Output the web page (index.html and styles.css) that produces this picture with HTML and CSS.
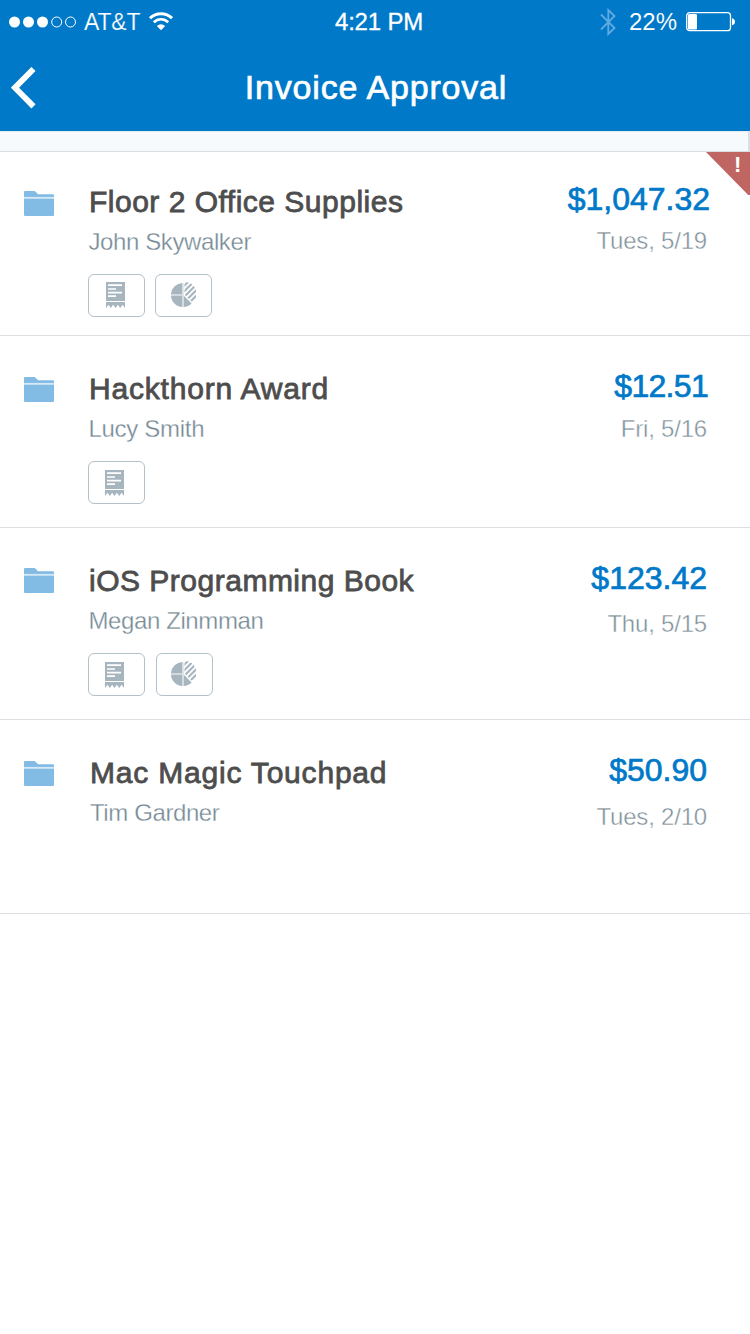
FILE: index.html
```html
<!DOCTYPE html>
<html lang="en">
<head>
<meta charset="utf-8">
<title>Invoice Approval</title>
<link rel="stylesheet" href="styles.css">
</head>
<body>
<svg class="defs" aria-hidden="true">
  <symbol id="folder" viewBox="0 0 30 25">
    <path d="M0 1Q0 0 1 0H10.5Q11.5 .3 14 3.3H29Q30 3.3 30 4.3V6H0Z" fill="#82bbe4"/>
    <path d="M0 5.9H30V8H0Z" fill="#d6e9f6"/>
    <path d="M0 7.8H30V24Q30 25 29 25H1Q0 25 0 24Z" fill="#82bbe4"/>
  </symbol>
  <symbol id="receipt" viewBox="0 0 19 26">
    <path d="M0 0H19V19H0ZM0 20H19V26L16.6 22.8L14.3 26L11.9 22.8L9.5 26L7.1 22.8L4.8 26L2.4 22.8L0 26Z" fill="#a7b5bf"/>
    <path d="M2 3.2H16M2 7H10M2 10.6H16M2 14.2H10" stroke="#fff" stroke-width="1.7"/>
  </symbol>
  <symbol id="pie" viewBox="0 0 25 25">
    <clipPath id="wedge"><path d="M13.5 0A12 12 0 0 1 21.8 20.8L13.5 12.5Z"/></clipPath>
    <path d="M11.4 1V12H0A12 12 0 0 1 11.4 1ZM0 13.4H11.4V25A12 12 0 0 1 0 13.4ZM12.6 13.4L20.6 21.5A12 12 0 0 1 12.6 25Z" fill="#a7b5bf"/>
    <path d="M11.4 1H12.6V25H11.4ZM0 12H12V13.4H0Z" fill="#d3dadf"/>
    <path clip-path="url(#wedge)" d="M10 7L20 -3M10 12.5L25 -2.5M12 16L27 1M15 18.5L29 4.5M17 22L30 9" stroke="#a7b5bf" stroke-width="2.1"/>
  </symbol>
</svg>

<header class="header">
  <div class="status">
    <div class="status-left">
      <svg width="68" height="14" viewBox="0 0 68 14"><g fill="#fff"><circle cx="5.5" cy="7" r="5.5"/><circle cx="19.5" cy="7" r="5.5"/><circle cx="33.5" cy="7" r="5.5"/></g><g fill="none" stroke="#fff"><circle cx="47.7" cy="7" r="5"/><circle cx="61.5" cy="7" r="5"/></g></svg>
      <span class="carrier">AT&amp;T</span>
      <svg class="wifi" width="24" height="19" viewBox="0 0 24 19"><g fill="none" stroke="#fff"><path d="M1 6.2C7 .1 17 .1 23 6.2" stroke-width="3"/><path d="M4.8 10.3C9 6.2 15 6.2 19.2 10.3" stroke-width="2.7"/></g><path d="M12 18.3L7.8 14.1Q12 10.4 16.2 14.1Z" fill="#fff"/></svg>
    </div>
    <span class="clock">4:21 PM</span>
    <div class="status-right">
      <svg width="16" height="28" viewBox="0 0 16 28"><path d="M1 6.5L14.5 20L8.3 26V2L14.5 8L1 21.5" fill="none" stroke="#62abe0" stroke-width="1.8"/></svg>
      <span class="percent">22%</span>
      <svg width="49" height="20" viewBox="0 0 49 20"><rect x=".7" y=".7" width="43.8" height="18" rx="3" fill="none" stroke="#fff" stroke-width="1.3"/><rect x="2" y="2" width="9" height="15.5" rx="1.3" fill="#fff"/><path d="M46 6.3Q49 7.2 49 9.8T46 13.3Z" fill="#fff"/></svg>
    </div>
  </div>
  <div class="nav">
    <svg class="back" width="25" height="42" viewBox="0 0 25 42"><path d="M22.5 2L4 20.7L22.5 39.4" fill="none" stroke="#fff" stroke-width="5.8"/></svg>
    <h1 class="heading">Invoice Approval</h1>
  </div>
</header>
<div class="strip"></div>

<main class="list">
  <article class="row row-first">
    <svg class="folder"><use href="#folder"/></svg>
    <div class="info">
      <h2 class="title">Floor 2 Office Supplies</h2>
      <p class="person">John Skywalker</p>
      <div class="pills"><span class="pill"><svg class="receipt"><use href="#receipt"/></svg></span><span class="pill"><svg class="pie"><use href="#pie"/></svg></span></div>
    </div>
    <div class="figures"><p class="amount">$1,047.32</p><p class="date">Tues, 5/19</p></div>
    <div class="alert"><span class="bang">!</span></div>
  </article>
  <article class="row row-second">
    <svg class="folder"><use href="#folder"/></svg>
    <div class="info">
      <h2 class="title">Hackthorn Award</h2>
      <p class="person">Lucy Smith</p>
      <div class="pills"><span class="pill"><svg class="receipt"><use href="#receipt"/></svg></span></div>
    </div>
    <div class="figures"><p class="amount">$12.51</p><p class="date">Fri, 5/16</p></div>
  </article>
  <article class="row row-third">
    <svg class="folder"><use href="#folder"/></svg>
    <div class="info">
      <h2 class="title">iOS Programming Book</h2>
      <p class="person">Megan Zinmman</p>
      <div class="pills"><span class="pill"><svg class="receipt"><use href="#receipt"/></svg></span><span class="pill"><svg class="pie"><use href="#pie"/></svg></span></div>
    </div>
    <div class="figures"><p class="amount">$123.42</p><p class="date">Thu, 5/15</p></div>
  </article>
  <article class="row row-fourth">
    <svg class="folder"><use href="#folder"/></svg>
    <div class="info">
      <h2 class="title">Mac Magic Touchpad</h2>
      <p class="person">Tim Gardner</p>
    </div>
    <div class="figures"><p class="amount">$50.90</p><p class="date">Tues, 2/10</p></div>
  </article>
</main>
</body>
</html>
```

FILE: styles.css
```css
* { box-sizing: border-box; }
body { margin: 0; background: #fff; font-family: "Liberation Sans", Arial, sans-serif; min-height: 1334px; }
h1, h2, p { margin: 0; font-weight: 400; white-space: nowrap; }
svg { display: block; flex: none; }
.defs { position: absolute; width: 0; height: 0; }

.header { height: 131px; background: #0079c9; color: #fff; }
.status { height: 44px; display: grid; grid-template-columns: 1fr auto 1fr; padding: 0 15px 0 9px; font-size: 24px; line-height: 44px; }
.status-left, .status-right { display: flex; align-items: center; }
.status-right { justify-content: flex-end; }
.carrier { font-size: 23px; margin-left: 7px; letter-spacing: -.2px; -webkit-text-stroke: .2px #0079c9; }
.wifi { margin: -2px 0 0 9px; }
.clock { margin-left: 14px; letter-spacing: -.2px; -webkit-text-stroke: .3px #fff; }
.percent { margin: 0 9px 0 13px; -webkit-text-stroke: .1px #0079c9; }
.nav { height: 87px; display: grid; grid-template-columns: 100px 1fr 100px; }
.back { margin: 23px 0 0 11px; }
.heading { text-align: center; font-size: 34px; line-height: 87px; letter-spacing: .8px; margin-left: 2px; -webkit-text-stroke: .7px #fff; }
.strip { height: 21px; background: #f6fafd; border-top: 1px solid #e4ebf0; border-bottom: 1px solid #dadfe3; border-right: 2px solid #dadfe6; }

.row { position: relative; display: flex; height: 192px; padding: 33px 43px 0 24px; border-bottom: 1px solid #dcdfe2; }
.row-first { height: 184px; padding-top: 30px; padding-right: 40px; }
.row-fourth { height: 194px; }
.folder { width: 30px; height: 25px; margin-top: 8px; }
.row-first .folder { margin-top: 9px; }
.row-third .folder { margin-top: 7px; }
.info { flex: 1; margin-left: 34px; }
.title { margin-left: 1px; font-size: 30px; line-height: 40px; color: #4d4d4d; letter-spacing: .5px; -webkit-text-stroke: .8px #4d4d4d; }
.row-second .title { letter-spacing: .8px; }
.row-fourth .title { letter-spacing: .8px; margin-left: 2px; }
.person { margin-top: 5px; margin-left: .5px; font-size: 24px; line-height: 30px; color: #768a95; letter-spacing: -.4px; -webkit-text-stroke: .3px #fff; }
.row-second .person { letter-spacing: -.3px; }
.row-fourth .person { margin-left: 2px; }
.pills { display: flex; gap: 10px; margin-top: 17px; }
.row-third .pills { gap: 11px; }
.pill { width: 57px; height: 43px; border: 1px solid #b3c1ca; border-radius: 6px; padding: 8px 0 0 16px; }
.row-first .pill { padding: 7px 0 0 17px; }
.receipt { width: 19px; height: 26px; }
.pie { width: 25px; height: 25px; margin: -1px 0 0 -2px; }
.row-first .pie { margin: 0 0 0 -2px; }
.figures { margin-top: -2px; text-align: right; }
.amount { font-size: 32px; line-height: 38px; color: #0079c9; -webkit-text-stroke: .7px #0079c9; }
.row-second .amount { letter-spacing: -.7px; margin-right: -1px; }
.date { margin-top: 9px; font-size: 24px; line-height: 30px; color: #7e9099; letter-spacing: -.2px; -webkit-text-stroke: .4px #fff; }
.row-first .date { margin-top: 8px; margin-right: 3px; }
.row-third .date { margin-top: 12px; }
.row-fourth .date { margin-top: 13px; }
.alert { position: absolute; top: 0; right: 0; width: 44px; height: 43px; background: #bf6663; clip-path: polygon(0 0, 100% 0, 100% 100%, 96% 100%); color: #fff; }
.bang { display: block; padding-left: 28px; font-size: 22px; line-height: 26px; font-weight: 700; }
```
